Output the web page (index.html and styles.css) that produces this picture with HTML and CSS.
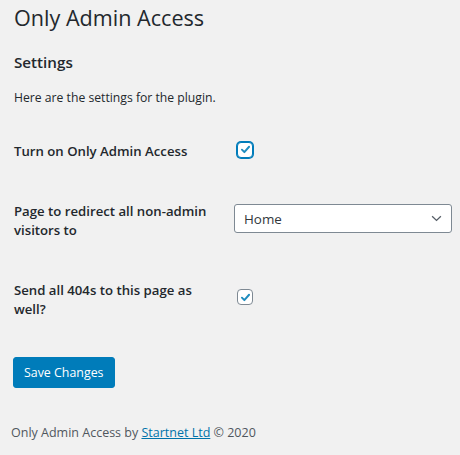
FILE: index.html
```html
<!DOCTYPE html>
<html lang="en">
<head>
<meta charset="utf-8">
<title>Only Admin Access</title>
<link rel="stylesheet" href="styles.css">
</head>
<body>
<div class="wrap">
  <h1 class="page-title">Only Admin Access</h1>
  <h2 class="section-title">Settings</h2>
  <p class="intro">Here are the settings for the plugin.</p>

  <div class="form-table">
    <div class="field-label">Turn on Only Admin Access</div>
    <div class="field-control">
      <span class="checkbox checkbox-focus">
        <svg viewBox="0 0 16 16" width="16" height="16"><path d="M3.6 8.2 L6.6 11.2 L12.4 4.6" fill="none" stroke="#1e8cbe" stroke-width="2.4" stroke-linecap="round" stroke-linejoin="round"/></svg>
      </span>
    </div>

    <div class="field-label">Page to redirect all non-admin visitors to</div>
    <div class="field-control">
      <div class="select">
        <span class="select-value">Home</span>
        <svg class="select-arrow" viewBox="0 0 12 8" width="12" height="8"><path d="M1 1.5 L6 6.2 L11 1.5" fill="none" stroke="#555d66" stroke-width="1.5"/></svg>
      </div>
    </div>

    <div class="field-label">Send all 404s to this page as well?</div>
    <div class="field-control">
      <span class="checkbox checkbox-low">
        <svg viewBox="0 0 16 16" width="16" height="16"><path d="M3.6 8.2 L6.6 11.2 L12.4 4.6" fill="none" stroke="#1e8cbe" stroke-width="2.4" stroke-linecap="round" stroke-linejoin="round"/></svg>
      </span>
    </div>
  </div>

  <button class="button-primary" type="button">Save Changes</button>

  <p class="footer">Only Admin Access by <a href="#">Startnet Ltd</a> © 2020</p>
</div>
</body>
</html>
```
FILE: styles.css
```css
html, body {
  margin: 0;
  padding: 0;
  background: #f1f1f1;
}

body {
  font-family: "Open Sans", "Noto Sans", "Liberation Sans", sans-serif;
  color: #23282d;
  font-size: 12.2px;
}

.wrap {
  padding: 3px 8px 0 14px;
}

.page-title {
  margin: 0 0 19px;
  font-size: 21.6px;
  font-weight: 400;
  line-height: 30px;
}

.section-title {
  margin: 0 0 15px;
  font-size: 15.2px;
  font-weight: 600;
  line-height: 21px;
}

.intro {
  margin: 0 0 34px;
  font-size: 12.2px;
  line-height: 19.5px;
}

.form-table {
  display: grid;
  grid-template-columns: 220px 218px;
  row-gap: 42px;
  align-items: start;
}

.field-label {
  font-size: 13.2px;
  font-weight: 600;
  line-height: 18.5px;
  padding-right: 10px;
}

.field-control {
  display: flex;
  align-items: flex-start;
}

.checkbox {
  box-sizing: border-box;
  width: 16px;
  height: 16px;
  border: 1px solid #7e8993;
  border-radius: 4px;
  background: #fff;
  display: flex;
  align-items: center;
  justify-content: center;
  margin-left: 3px;
}

.checkbox svg {
  display: block;
  width: 13px;
  height: 13px;
}

.checkbox-focus {
  margin-top: 0;
  border-color: #007cba;
  box-shadow: 0 0 0 1px #007cba;
}

.checkbox-low {
  margin-top: 8px;
}

.select {
  box-sizing: border-box;
  width: 218px;
  height: 29px;
  margin-top: 2px;
  border: 1px solid #7e8993;
  border-radius: 3px;
  background: #fff;
  display: flex;
  align-items: center;
  justify-content: space-between;
  padding: 0 9px 0 9px;
  color: #32373c;
  font-size: 13.4px;
}

.select-arrow {
  display: block;
  width: 11px;
  height: 7px;
}

.button-primary {
  display: block;
  margin: 39px 0 0 -1px;
  height: 31px;
  padding: 0 10px;
  border: 1px solid #007cba;
  border-radius: 3px;
  background: #007cba;
  color: #fff;
  font-family: inherit;
  font-size: 12.4px;
  line-height: 29px;
}

.footer {
  margin: 35px 0 0 -3px;
  font-size: 12.5px;
  line-height: 19.5px;
  color: #50575e;
}

.footer a {
  color: #0073aa;
  text-decoration: underline;
}
```
